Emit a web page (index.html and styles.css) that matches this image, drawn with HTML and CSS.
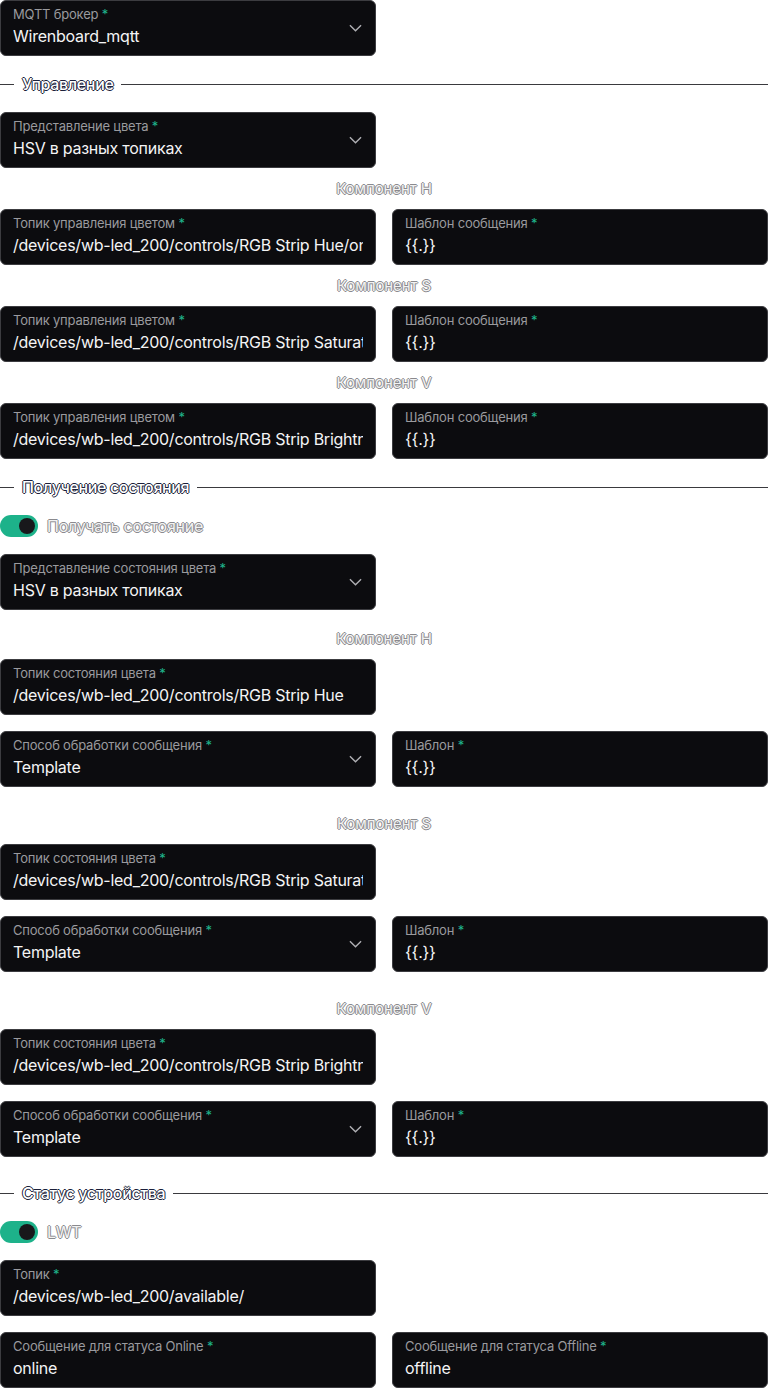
FILE: index.html
```html
<!DOCTYPE html>
<html lang="ru">
<head>
<meta charset="utf-8">
<title>Устройство</title>
<link rel="stylesheet" href="styles.css">
</head>
<body>
<form class="form">
  <div class="row">
    <div class="field select">
      <span class="label">MQTT брокер <i>*</i></span>
      <span class="value">Wirenboard_mqtt</span>
      <svg class="chev" viewBox="0 0 14 8"><path d="M1 1l6 6 6-6"/></svg>
    </div>
  </div>

  <div class="section"><span>Управление</span></div>

  <div class="row">
    <div class="field select">
      <span class="label">Представление цвета <i>*</i></span>
      <span class="value">HSV в разных топиках</span>
      <svg class="chev" viewBox="0 0 14 8"><path d="M1 1l6 6 6-6"/></svg>
    </div>
  </div>

  <div class="sub">Компонент H</div>
  <div class="row two">
    <div class="field"><span class="label">Топик управления цветом <i>*</i></span><span class="value">/devices/wb-led_200/controls/RGB Strip Hue/on</span></div>
    <div class="field"><span class="label">Шаблон сообщения <i>*</i></span><span class="value">{{.}}</span></div>
  </div>

  <div class="sub">Компонент S</div>
  <div class="row two">
    <div class="field"><span class="label">Топик управления цветом <i>*</i></span><span class="value">/devices/wb-led_200/controls/RGB Strip Saturation/on</span></div>
    <div class="field"><span class="label">Шаблон сообщения <i>*</i></span><span class="value">{{.}}</span></div>
  </div>

  <div class="sub">Компонент V</div>
  <div class="row two">
    <div class="field"><span class="label">Топик управления цветом <i>*</i></span><span class="value">/devices/wb-led_200/controls/RGB Strip Brightness/on</span></div>
    <div class="field"><span class="label">Шаблон сообщения <i>*</i></span><span class="value">{{.}}</span></div>
  </div>

  <div class="section"><span>Получение состояния</span></div>

  <label class="toggle"><span class="switch"></span><span class="toggle-text">Получать состояние</span></label>

  <div class="row">
    <div class="field select">
      <span class="label">Представление состояния цвета <i>*</i></span>
      <span class="value">HSV в разных топиках</span>
      <svg class="chev" viewBox="0 0 14 8"><path d="M1 1l6 6 6-6"/></svg>
    </div>
  </div>

  <div class="group">
    <div class="sub">Компонент H</div>
    <div class="row">
      <div class="field"><span class="label">Топик состояния цвета <i>*</i></span><span class="value">/devices/wb-led_200/controls/RGB Strip Hue</span></div>
    </div>
    <div class="row two">
      <div class="field select">
        <span class="label">Способ обработки сообщения <i>*</i></span>
        <span class="value">Template</span>
        <svg class="chev" viewBox="0 0 14 8"><path d="M1 1l6 6 6-6"/></svg>
      </div>
      <div class="field"><span class="label">Шаблон <i>*</i></span><span class="value">{{.}}</span></div>
    </div>
  </div>

  <div class="group">
    <div class="sub">Компонент S</div>
    <div class="row">
      <div class="field"><span class="label">Топик состояния цвета <i>*</i></span><span class="value">/devices/wb-led_200/controls/RGB Strip Saturation</span></div>
    </div>
    <div class="row two">
      <div class="field select">
        <span class="label">Способ обработки сообщения <i>*</i></span>
        <span class="value">Template</span>
        <svg class="chev" viewBox="0 0 14 8"><path d="M1 1l6 6 6-6"/></svg>
      </div>
      <div class="field"><span class="label">Шаблон <i>*</i></span><span class="value">{{.}}</span></div>
    </div>
  </div>

  <div class="group">
    <div class="sub">Компонент V</div>
    <div class="row">
      <div class="field"><span class="label">Топик состояния цвета <i>*</i></span><span class="value">/devices/wb-led_200/controls/RGB Strip Brightness</span></div>
    </div>
    <div class="row two">
      <div class="field select">
        <span class="label">Способ обработки сообщения <i>*</i></span>
        <span class="value">Template</span>
        <svg class="chev" viewBox="0 0 14 8"><path d="M1 1l6 6 6-6"/></svg>
      </div>
      <div class="field"><span class="label">Шаблон <i>*</i></span><span class="value">{{.}}</span></div>
    </div>
  </div>

  <div class="section"><span>Статус устройства</span></div>

  <label class="toggle"><span class="switch"></span><span class="toggle-text">LWT</span></label>

  <div class="row">
    <div class="field"><span class="label">Топик <i>*</i></span><span class="value">/devices/wb-led_200/available/</span></div>
  </div>

  <div class="row two">
    <div class="field"><span class="label">Сообщение для статуса Online <i>*</i></span><span class="value">online</span></div>
    <div class="field"><span class="label">Сообщение для статуса Offline <i>*</i></span><span class="value">offline</span></div>
  </div>
</form>
</body>
</html>
```

FILE: styles.css
```css
* { box-sizing: border-box; }

html, body {
  margin: 0;
  padding: 0;
  background: #ffffff;
}

body {
  font-family: Inter, "Noto Sans", sans-serif;
  width: 768px;
  height: 1390px;
  overflow: hidden;
}

.form {
  display: flex;
  flex-direction: column;
  gap: 16px;
}

.row {
  display: grid;
  grid-template-columns: 376px;
  gap: 16px;
}

.row.two {
  grid-template-columns: 376px 376px;
}

.field {
  position: relative;
  height: 56px;
  background: #0c0c0f;
  border: 1px solid #3c3c40;
  border-radius: 6px;
  padding: 5px 12px 0 12px;
  display: flex;
  flex-direction: column;
  overflow: hidden;
}

.field.select { padding-right: 40px; }

.label {
  font-size: 13px;
  line-height: 16px;
  color: #9a9a9e;
  letter-spacing: -0.2px;
  white-space: nowrap;
}

.label i {
  font-style: normal;
  color: #1fb58c;
}

.value {
  margin-top: 2px;
  font-size: 16px;
  line-height: 24px;
  color: #f4f4f5;
  letter-spacing: -0.25px;
  white-space: nowrap;
  overflow: hidden;
  text-overflow: clip;
}

.chev {
  position: absolute;
  right: 13px;
  top: 23px;
  width: 13px;
  height: 8px;
  fill: none;
  stroke: #b0b0b4;
  stroke-width: 1.5;
}

/* section header with rule on both sides */
.section {
  display: flex;
  align-items: center;
  height: 24px;
}

.section::before {
  content: "";
  width: 14px;
  height: 1px;
  background: #3a3a3e;
}

.section::after {
  content: "";
  flex: 1;
  height: 1px;
  background: #3a3a3e;
}

.section span {
  padding: 0 8px;
  font-size: 16px;
  font-weight: 500;
  letter-spacing: -0.35px;
  color: #ffffff;
  text-shadow: 1px 0 0 #1b1f3a, -1px 0 0 #1b1f3a, 0 1px 0 #1b1f3a, 0 -1px 0 #1b1f3a;
}

.sub {
  font-size: 15px;
  line-height: 20px;
  height: 9px;
  display: flex;
  align-items: center;
  justify-content: center;
  letter-spacing: -0.1px;
  color: #f2f2f2;
  text-shadow: 1px 0 0 #8a8a8e, -1px 0 0 #8a8a8e, 0 1px 0 #8a8a8e, 0 -1px 0 #8a8a8e;
}

.group {
  display: flex;
  flex-direction: column;
  gap: 16px;
  padding: 8px 0;
}

.toggle {
  display: flex;
  align-items: center;
  gap: 9px;
  height: 22px;
  margin-bottom: 1px;
}

.switch {
  position: relative;
  width: 38px;
  height: 22px;
  border-radius: 11px;
  background: #1db28a;
}

.switch::after {
  content: "";
  position: absolute;
  right: 3px;
  top: 3px;
  width: 16px;
  height: 16px;
  border-radius: 50%;
  background: #18181b;
}

.toggle-text {
  font-size: 16px;
  letter-spacing: -0.25px;
  color: #f2f2f2;
  text-shadow: 1px 0 0 #8a8a8e, -1px 0 0 #8a8a8e, 0 1px 0 #8a8a8e, 0 -1px 0 #8a8a8e;
}
```
